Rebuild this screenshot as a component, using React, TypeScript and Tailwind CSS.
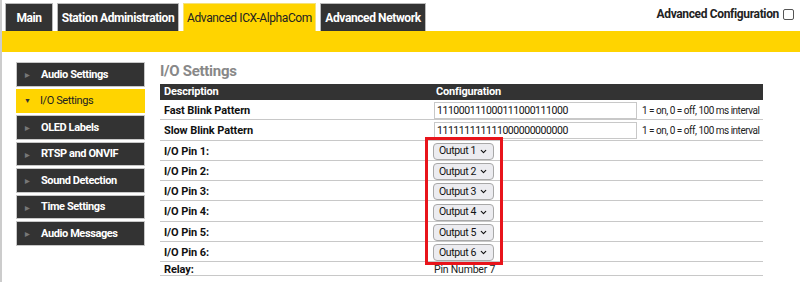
import { ChevronDown } from 'lucide-react';

const font = { fontFamily: 'Roboto, "Liberation Sans", sans-serif' };

const tabs = [
  { label: 'Main', w: 'w-[48px]' },
  { label: 'Station Administration', w: 'w-[122px]' },
  { label: 'Advanced ICX-AlphaCom', w: 'w-[133px]', active: true },
  { label: 'Advanced Network', w: 'w-[106px]' },
];

const menu = [
  'Audio Settings',
  'I/O Settings',
  'OLED Labels',
  'RTSP and ONVIF',
  'Sound Detection',
  'Time Settings',
  'Audio Messages',
];

function Tabs() {
  return (
    <div className="flex h-[31px] items-end justify-between pl-[3px]">
      <div className="flex gap-[4px]">
        {tabs.map((t) =>
          t.active ? (
            <div
              key={t.label}
              className={`${t.w} flex h-[28px] items-center justify-center border border-b-0 border-[#f5e27a] bg-[#ffd400] pt-[1px] text-[12px] tracking-[-0.4px] text-[#222]`}
            >
              {t.label}
            </div>
          ) : (
            <div
              key={t.label}
              className={`${t.w} flex h-[28px] items-center justify-center border border-b-0 border-[#bbb] bg-[#333] pt-[1px] text-[12px] font-bold tracking-[-0.4px] text-white`}
            >
              {t.label}
            </div>
          )
        )}
      </div>
      <div className="flex items-center gap-[4px] self-start pt-[5px] pr-[6px]">
        <span className="text-[12px] font-bold tracking-[-0.35px] text-[#222]">Advanced Configuration</span>
        <span className="h-[11px] w-[11px] rounded-[2px] border border-[#555] bg-white" />
      </div>
    </div>
  );
}

function Sidebar() {
  return (
    <div className="flex w-[129px] shrink-0 flex-col gap-[2px]">
      {menu.map((m) => {
        const active = m === 'I/O Settings';
        return (
          <div
            key={m}
            className={
              active
                ? 'flex h-[24.5px] items-center bg-[#ffd400] pt-[1px] pl-[8px] text-[11px] tracking-[-0.4px] text-[#222]'
                : 'flex h-[24.5px] items-center border border-[#c8c8c8] bg-[#333] pt-[1px] pl-[8px] text-[11px] font-bold tracking-[-0.4px] text-white'
            }
          >
            <span className={active ? 'w-[16px] text-[7px] text-[#333]' : 'w-[16px] text-[6px] text-[#777]'}>
              {active ? '▼' : '▶'}
            </span>
            {m}
          </div>
        );
      })}
    </div>
  );
}

function Row({ label, children, h = 'h-[20.3px]' }: { label: string; children?: React.ReactNode; h?: string }) {
  return (
    <div className={`flex ${h} items-center border-b border-[#c8c8c8] pt-[2px]`}>
      <div className="w-[274px] shrink-0 pt-[1px] pl-[4px] text-[11px] font-bold tracking-[-0.1px] text-[#111]">
        {label}
      </div>
      <div className="flex items-center">{children}</div>
    </div>
  );
}

function PatternInput({ value }: { value: string }) {
  return (
    <>
      <div className="flex h-[17px] w-[203px] items-center border border-[#c8c8c8] bg-white pl-[2px] text-[10.5px] tracking-[-0.45px] text-[#111]">
        {value}
      </div>
      <span className="pl-[5px] text-[10px] tracking-[-0.5px] whitespace-nowrap text-[#222]">
        1 = on, 0 = off, 100 ms interval
      </span>
    </>
  );
}

function OutputSelect({ n }: { n: number }) {
  return (
    <div className="-ml-[1px] flex h-[17px] w-[61px] items-center justify-between rounded-[4px] border border-[#a8a8a8] bg-[#ececf0] pr-[5px] pl-[5px] text-[10.5px] tracking-[-0.4px] text-[#111]">
      <span>Output {n}</span>
      <ChevronDown size={9} strokeWidth={3} />
    </div>
  );
}

export default function App() {
  return (
    <div className="relative h-[282px] w-[800px] overflow-hidden border-l-2 border-[#ccc] bg-white" style={font}>
      <Tabs />
      <div className="h-[21px] bg-[#ffd400]" />
      <div className="flex pt-[10px] pl-[14px]">
        <Sidebar />
        <div className="ml-[15px] w-[603px]">
          <div className="h-[22px] pt-[1px] text-[15px] leading-[17px] font-bold tracking-[-0.3px] text-[#888]">
            I/O Settings
          </div>
          <div className="flex h-[16px] items-center bg-[#333] pt-[1px] text-[11px] font-bold tracking-[-0.2px] text-white">
            <div className="w-[274px] pl-[4px]">Description</div>
            <div className="pl-[2px]">Configuration</div>
          </div>
          <Row label="Fast Blink Pattern">
            <PatternInput value="111000111000111000111000" />
          </Row>
          <Row label="Slow Blink Pattern">
            <PatternInput value="111111111111000000000000" />
          </Row>
          {[1, 2, 3, 4, 5, 6].map((n) => (
            <Row key={n} label={`I/O Pin ${n}:`}>
              <OutputSelect n={n} />
            </Row>
          ))}
          <Row label="Relay:" h="h-[14px]">
            <span className="text-[10.5px] tracking-[-0.2px] text-[#222]">Pin Number 7</span>
          </Row>
        </div>
      </div>
      <div className="absolute top-[137px] left-[423px] h-[128px] w-[78px] border-[3px] border-[#e8141b]" />
    </div>
  );
}
